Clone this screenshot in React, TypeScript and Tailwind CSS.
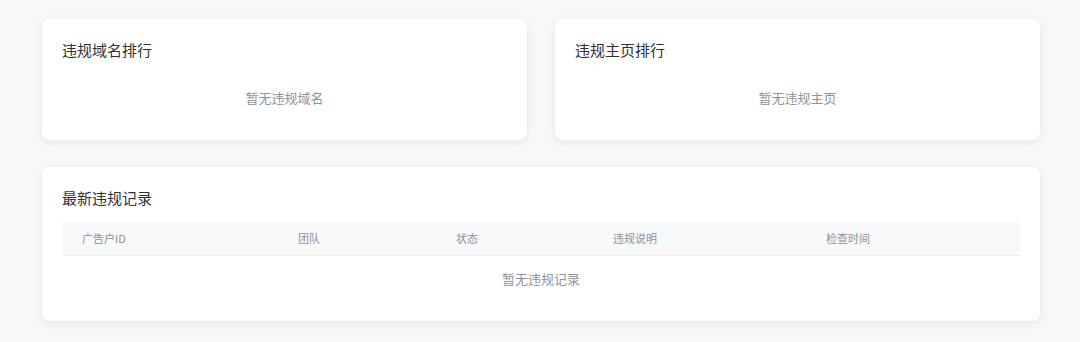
export default function App() {
  const font = { fontFamily: '"Noto Sans CJK SC", "Noto Sans", sans-serif' };
  const cols = ["广告户ID", "团队", "状态", "违规说明", "检查时间"];
  return (
    <div
      className="min-h-[342px] w-[1080px] bg-[#f7f8fa] pl-[42px] pr-[40px] pt-[19px] pb-[21px] flex flex-col gap-[27px]"
      style={font}
    >
      <div className="grid grid-cols-2 gap-[28px]">
        {[
          ["违规域名排行", "暂无违规域名"],
          ["违规主页排行", "暂无违规主页"],
        ].map(([t, e]) => (
          <div
            key={t}
            className="h-[121px] rounded-lg bg-white px-5 pt-[19px] shadow-[0_2px_8px_rgba(0,0,0,0.08)]"
          >
            <div className="text-[15px] leading-6 text-[#303133]">{t}</div>
            <div className="pt-[26px] text-center text-[13px] leading-5 text-[#909399]">
              {e}
            </div>
          </div>
        ))}
      </div>
      <div className="h-[154px] rounded-lg bg-white px-5 pt-[19px] shadow-[0_2px_8px_rgba(0,0,0,0.08)]">
        <div className="text-[15px] leading-6 text-[#303133]">最新违规记录</div>
        <div className="mt-[12px]">
          <div className="grid h-[34px] grid-cols-[216px_158px_157px_213px_1fr] items-center border-b border-[#ebeef5] bg-[#f8f9fb] text-[11px] text-[#8c9099]">
            {cols.map((c) => (
              <div key={c} className="pl-5">
                {c}
              </div>
            ))}
          </div>
          <div className="pt-[13px] text-center text-[13px] leading-5 text-[#909399]">
            暂无违规记录
          </div>
        </div>
      </div>
    </div>
  );
}
